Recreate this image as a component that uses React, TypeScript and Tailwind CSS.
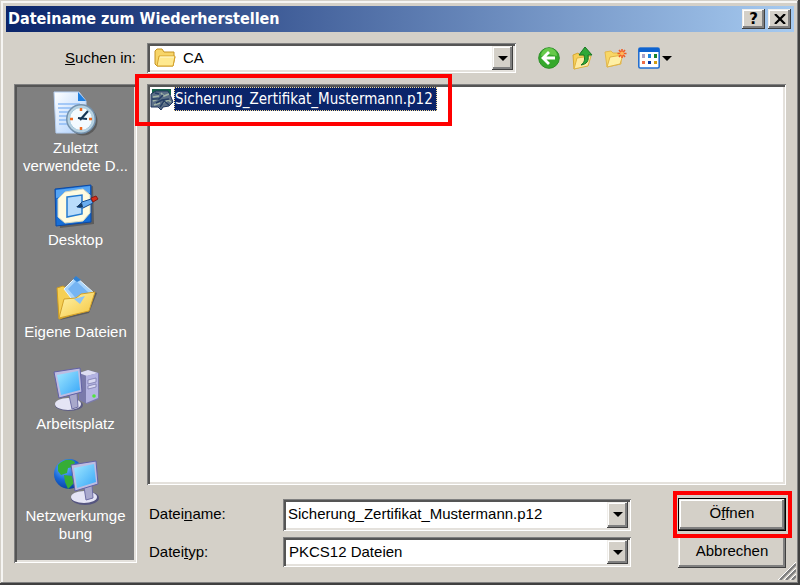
import type { ReactNode } from "react"

const sunken = "shadow-[inset_1px_1px_#808080,inset_-1px_-1px_#ffffff,inset_3px_3px_#555555,inset_-3px_-3px_#e4e1dc]"
const raised = "bg-[#d4d0c8] shadow-[inset_-1px_-1px_#404040,inset_1px_1px_#f0eeea,inset_-3px_-3px_#808080,inset_2px_2px_#ffffff]"

function RecentIcon() {
    return (
        <svg viewBox="0 0 46 46" className="size-[46px] shrink-0" aria-hidden="true">
            <defs>
                <linearGradient id="paper" x1="0" y1="0" x2="1" y2="1">
                    <stop offset="0" stopColor="#ffffff"/>
                    <stop offset="1" stopColor="#a9cdfb"/>
                </linearGradient>
            </defs>
            <path d="M1 1h25l7 9v32H3z" fill="url(#paper)" stroke="#b5cff2"/>
            <path d="M25 1v9h8z" fill="#1f7fe0"/>
            <path d="M5 13h22M5 17h18M6 21h12M6 25h9M6 29h8M6 33h9" stroke="#8fbcf5" strokeWidth="1.5"/>
            <circle cx="30" cy="30" r="14.5" fill="#444" opacity=".6"/>
            <circle cx="28" cy="28" r="15" fill="#7492ae"/>
            <circle cx="28" cy="28" r="13.5" fill="#b9d3e2"/>
            <circle cx="28" cy="28" r="11.5" fill="#f4fbff" stroke="#a5c9dd"/>
            <path d="M28 17v3M28 36v3M17 28h3M36 28h3" stroke="#ee6b22" strokeWidth="2.5"/>
            <path d="M27 29l8-9M25 27l9 1" stroke="#173653" strokeWidth="2.2"/>
        </svg>
    )
}

function DesktopIcon() {
    return (
        <svg viewBox="0 0 46 46" className="size-[46px] shrink-0" aria-hidden="true">
            <path d="M4 8l36-5 1 38-34 4z" fill="#444" opacity=".6"/>
            <path d="M2 6l36-4v37L3 43z" fill="#176fd7" stroke="#0b49a5"/>
            <path d="M3 7l34-4v7L3 15z" fill="#55a4f3"/>
            <path d="M12 9l18-3 7 6v18l-7 8-18 2-7-6V16z" fill="#fffbe0" stroke="#d7d9c0"/>
            <path d="M14 14l15-2v19l-15 3z" fill="#b9dcfb" stroke="#247bd0" strokeWidth="1.5"/>
            <path d="M24 24l5-5 9-3 2 4-10 5z" fill="#6aaef0" stroke="#174d8e"/>
            <path d="M23 24l6-4 1 4z" fill="#173a60"/>
            <path d="M38 15l5-2 2 3-5 3z" fill="#d92d19" stroke="#841b13"/>
        </svg>
    )
}

function DocumentsIcon() {
    return (
        <svg viewBox="0 0 46 46" className="size-[46px] shrink-0" aria-hidden="true">
            <defs>
                <linearGradient id="folder" x1="0" y1="0" x2="1" y2="1">
                    <stop offset="0" stopColor="#fff6b0"/>
                    <stop offset="1" stopColor="#f5c43b"/>
                </linearGradient>
            </defs>
            <path d="M7 45l29-7 8-20-4-2z" fill="#444" opacity=".6"/>
            <path d="M4 13l6-2 5 3 18 3v19L6 44z" fill="#f5cf54" stroke="#cd9b21"/>
            <path d="M11 14L23 2l18 16-16 14z" fill="#a8d4fb" stroke="#eaf6ff"/>
            <path d="M15 14l8-8 13 12-10 9z" fill="#75b4f3"/>
            <path d="M20 4l3-3 5 4-4 2z" fill="#2e7fd1"/>
            <path d="M6 43l5-19 12-1 5-4 14-2-6 19z" fill="url(#folder)" stroke="#d2a12b"/>
            <path d="M21 24l11-3-5 8z" fill="#8cc4f5"/>
        </svg>
    )
}

function ScreenFill() {
    return (
        <linearGradient id="screen" x1="0" y1="0" x2="1" y2="1">
            <stop offset="0" stopColor="#a0e8ff"/>
            <stop offset="1" stopColor="#38a6f8"/>
        </linearGradient>
    )
}

function ComputerIcon() {
    return (
        <svg viewBox="0 0 46 46" className="size-[46px] shrink-0" aria-hidden="true">
            <defs><ScreenFill/></defs>
            <path d="M26 6l9-3 11 3v26l-12 5-8-4z" fill="#7a7aab"/>
            <path d="M26 6l9-3 10 3-11 3z" fill="#dedef2"/>
            <path d="M33 9l12-3v25l-12 5z" fill="#b4b4e2"/>
            <path d="M35 13l8-2v4l-8 2zM35 19l8-2v3l-8 2z" fill="#d9d9f3" stroke="#7272a8" strokeWidth=".7"/>
            <circle cx="41" cy="29" r="1.8" fill="#50e63d"/>
            <ellipse cx="16" cy="38" rx="14" ry="6" fill="#5d5d86"/>
            <ellipse cx="15" cy="37" rx="13" ry="6" fill="#e5e5f5"/>
            <path d="M16 28l8-2 1 14-6 2z" fill="#a8a8cb" stroke="#6e6ea5"/>
            <path d="M1 5l26-4 2 24-23 6z" fill="#bdbde2" stroke="#6261a5"/>
            <path d="M4 8l21-4 2 19-19 5z" fill="url(#screen)"/>
        </svg>
    )
}

function NetworkIcon() {
    return (
        <svg viewBox="0 0 46 46" className="size-[46px] shrink-0" aria-hidden="true">
            <defs>
                <radialGradient id="globe" cx=".35" cy=".3" r=".8">
                    <stop offset="0" stopColor="#6fbcff"/>
                    <stop offset=".5" stopColor="#1868d8"/>
                    <stop offset="1" stopColor="#063790"/>
                </radialGradient>
            </defs>
            <circle cx="16" cy="15" r="15" fill="url(#globe)"/>
            <path d="M5 6c4-5 12-7 17-3l-2 5-5 1-1 5-6 2-3-4zM11 16l8 1 2 7-6 6-3-7zM24 6l5 5-4 4z" fill="#35ad35"/>
            <ellipse cx="32" cy="39" rx="14" ry="7" fill="#55557f"/>
            <ellipse cx="31" cy="38" rx="13" ry="6" fill="#e5e5f5"/>
            <path d="M31 28l8-2 1 13-7 2z" fill="#a9a9cd" stroke="#6e6ea5"/>
            <path d="M18 6l25-4 2 23-23 7z" fill="#bdbde2" stroke="#6261a5"/>
            <path d="M21 9l20-4 2 18-19 6z" fill="url(#screen)"/>
        </svg>
    )
}

function FolderIcon() {
    return (
        <svg viewBox="0 0 22 20" className="h-5 w-[22px]" aria-hidden="true">
            <path d="M1 3l2-2h5l2 3h10v5h1l-2 9H3l-2-2z" fill="#f7d568" stroke="#c49222"/>
            <path d="M5 8h16l-2 10H3z" fill="#ffe98f" stroke="#d7a32b"/>
            <path d="M6 9h14" stroke="#fff9cf"/>
        </svg>
    )
}

function BackIcon() {
    return (
        <svg viewBox="0 0 22 22" className="size-[22px]" aria-hidden="true">
            <circle cx="11" cy="11" r="10.3" fill="#36a82c" stroke="#2c8f27"/>
            <path d="M3 9a8 8 0 0 1 16 0q-8-3-16 0z" fill="#66c94b"/>
            <path d="M11 5l-6 6 6 6M5 11h12" fill="none" stroke="#fff" strokeWidth="2.8"/>
        </svg>
    )
}

function UpIcon() {
    return (
        <svg viewBox="0 0 22 24" className="h-6 w-[22px]" aria-hidden="true">
            <path d="M2 9l5-2 2 2h8v10L3 23z" fill="#f6cf59" stroke="#d6a733"/>
            <path d="M3 23l3-11 14-2-3 10z" fill="#ffeaa0" stroke="#dfb442"/>
            <path d="M10 19c4-3 4-6 3-10H8l6-8 7 8h-4c1 6-1 9-7 10z" fill="#2fa837" stroke="#167620"/>
        </svg>
    )
}

function NewFolderIcon() {
    return (
        <svg viewBox="0 0 23 22" className="h-[22px] w-[23px]" aria-hidden="true">
            <path d="M1 5l6-1 2 2h8v11L3 20z" fill="#f8d765" stroke="#e3b84e"/>
            <path d="M3 20l3-10 13-2-3 9z" fill="#fff0a5" stroke="#e0b347"/>
            <path d="M18 2v9M13.500 6.500h9M15 3l6 7M21 3l-6 7" stroke="#f05b23" strokeWidth="1.600"/>
            <circle cx="18" cy="6.500" r="2" fill="#ffb55b"/>
        </svg>
    )
}

function ViewIcon() {
    return (
        <svg viewBox="0 0 22 22" className="size-[22px]" aria-hidden="true">
            <rect x=".8" y="1" width="20.4" height="20" rx="1.5" fill="#fff" stroke="#236fd0" strokeWidth="1.6"/>
            <path d="M1 1h20v4H1z" fill="#0e63cf"/>
            <path d="M4 7h3v4H4z" fill="#a9a1c6"/>
            <path d="M10 7h3v4h-3z" fill="#1d84de"/>
            <path d="M16 7h3v4h-3z" fill="#16842d"/>
            <path d="M4 14h3v3H4z" fill="#ef6c44"/>
            <path d="M10 14h3v3h-3z" fill="#0a369f"/>
            <path d="M16 14h3v3h-3z" fill="#d29c13"/>
        </svg>
    )
}

function CertificateIcon() {
    return (
        <svg viewBox="0 0 24 22" className="h-[22px] w-6 shrink-0" aria-hidden="true">
            <path d="M2 1h19v6H2z" fill="#17664c"/>
            <path d="M1 6l5-3h12l3 6 2 5-4 4-6 1-2 3-3-3H1z" fill="#5c7087" stroke="#1f355c"/>
            <path d="M3 9l6-1M3 13l5-2M4 17l6-2M11 5l3 3 5-2M13 15l5-3 3 2" fill="none" stroke="#a3b6a8" strokeWidth="1.5"/>
            <path d="M2 11h7l4-4M6 15l6-3 7-1M10 19l4-6 5 4M5 5l4 1" fill="none" stroke="#263f66" strokeWidth="1.5"/>
        </svg>
    )
}

function Arrow() {
    return (
        <svg viewBox="0 0 10 5" className="h-[5px] w-[10px]" aria-hidden="true">
            <path d="M0 0h10L5 5z"/>
        </svg>
    )
}

type SelectProps = {
    id: string,
    value: string,
    className: string,
}

function Select({ id, value, className }: SelectProps) {
    return (
        <div className={`relative flex-1 bg-white p-[3px] ${sunken}`}>
            <select id={id} className={`block size-full appearance-none outline-none ${className}`}>
                <option>{value}</option>
            </select>
            <span className={`pointer-events-none absolute inset-y-[3px] right-[3px] flex w-[21px] items-center justify-center ${raised}`}>
                <Arrow/>
            </span>
        </div>
    )
}

type PlaceProps = {
    label: string,
    icon: ReactNode,
}

const places: PlaceProps[] = [
    { label: "Zuletzt verwendete D...", icon: <RecentIcon/> },
    { label: "Desktop", icon: <DesktopIcon/> },
    { label: "Eigene Dateien", icon: <DocumentsIcon/> },
    { label: "Arbeitsplatz", icon: <ComputerIcon/> },
    { label: "Netzwerkumge\u200bbung", icon: <NetworkIcon/> },
]

function Place({ label, icon }: PlaceProps) {
    return (
        <button className="flex h-[92px] w-full flex-col items-center gap-[2px] leading-[18px] text-white">
            {icon}
            <span>{label}</span>
        </button>
    )
}

export default function App() {
    return (
        <main className="relative flex min-h-screen flex-col bg-[#d4d0c8] p-[6px] font-['Liberation_Sans',Arial,sans-serif] text-[15px] text-black shadow-[inset_-2px_-2px_#404040,inset_1px_1px_#d4d0c8,inset_-3px_-3px_#808080,inset_3px_3px_#f6f5f3]">
            <header className="flex h-[26px] items-center gap-[3px] bg-linear-to-r/srgb from-[#0a246a] to-[#a6caf0] pr-[3px]">
                <h1 className="flex-1 pl-[2px] font-['DejaVu_Sans_Condensed','DejaVu_Sans',sans-serif] text-base font-bold text-white">Dateiname zum Wiederherstellen</h1>
                <button aria-label="Hilfe" className={`flex h-5 w-[23px] items-center justify-center font-['DejaVu_Sans',sans-serif] font-bold leading-5 ${raised}`}>?</button>
                <button aria-label="Schließen" className={`flex h-5 w-[23px] items-center justify-center ${raised}`}>
                    <svg viewBox="0 0 12 10" className="h-[10px] w-3" aria-hidden="true">
                        <path d="M1 0l10 10M11 0L1 10" stroke="#000" strokeWidth="2.2"/>
                    </svg>
                </button>
            </header>

            <div className="flex h-[52px] items-center pl-2">
                <label htmlFor="folder-select" className="w-[133px] pr-[11px] text-right"><u>S</u>uchen in:</label>
                <div className="relative flex h-[30px] flex-1">
                    <Select id="folder-select" value="CA" className="pl-[33px]"/>
                    <span className="pointer-events-none absolute left-[7px] top-[5px]"><FolderIcon/></span>
                </div>
                <div className="ml-[22px] mr-[122px] flex items-center gap-[11px]">
                    <button aria-label="Zurück"><BackIcon/></button>
                    <button aria-label="Übergeordneter Ordner"><UpIcon/></button>
                    <button aria-label="Neuer Ordner"><NewFolderIcon/></button>
                    <button aria-label="Ansicht" className="flex items-center gap-[2px]"><ViewIcon/><Arrow/></button>
                </div>
            </div>

            <div className="flex flex-1 gap-[10px] px-2 pb-[11px]">
                <nav className={`mb-[5px] w-[123px] bg-[#808080] px-[3px] pt-[7px] ${sunken}`}>
                    {places.map(place => <Place key={place.label} {...place}/>)}
                </nav>

                <section className="flex flex-1 flex-col">
                    <div className={`relative flex-1 bg-white p-[3px] ${sunken}`}>
                        <button className="flex items-center font-['DejaVu_Sans_Condensed','DejaVu_Sans',sans-serif] text-white">
                            <CertificateIcon/>
                            <span className="border border-dotted border-[#f5db95] bg-[#0a246a] pr-[3px] leading-[22px]">Sicherung_Zertifikat_Mustermann.p12</span>
                        </button>
                        <div className="pointer-events-none absolute -left-3 -top-[10px] h-[52px] w-[317px] border-4 border-[#ff0000]"/>
                    </div>

                    <form className="mt-[13px] flex flex-col gap-[5px]" onSubmit={event => event.preventDefault()}>
                        <div className="flex h-[33px] items-center">
                            <label htmlFor="filename" className="w-[136px] pl-[2px]">Datei<u>n</u>ame:</label>
                            <div className={`flex h-8 flex-1 bg-white p-[3px] ${sunken}`}>
                                <input id="filename" defaultValue="Sicherung_Zertifikat_Mustermann.p12" className="min-w-0 flex-1 pl-[2px] outline-none"/>
                                <button type="button" aria-label="Dateinamen anzeigen" className={`flex w-[21px] items-center justify-center ${raised}`}><Arrow/></button>
                            </div>
                            <div className="relative ml-[47px] h-full w-[108px]">
                                <button type="submit" className={`size-full border border-black pb-[2px] ${raised}`}>Ö<u>f</u>fnen</button>
                                <div className="pointer-events-none absolute -left-[5px] -top-[7px] h-[47px] w-[119px] border-4 border-[#ff0000]"/>
                            </div>
                        </div>
                        <div className="flex h-8 items-center">
                            <label htmlFor="filetype" className="w-[136px] pl-[2px]">Datei<u>t</u>yp:</label>
                            <div className="flex h-[30px] flex-1"><Select id="filetype" value="PKCS12 Dateien" className="pl-[3px]"/></div>
                            <button type="button" className={`ml-[47px] h-8 w-[108px] pb-[2px] ${raised}`}>Abbrechen</button>
                        </div>
                    </form>
                </section>
            </div>
            <svg viewBox="0 0 18 18" className="pointer-events-none absolute bottom-[5px] right-[4px] size-[18px]" aria-hidden="true">
                <path d="M2 18L18 2M8 18L18 8M14 18l4-4" stroke="#808080" strokeWidth="2.5"/>
                <path d="M0 18L18 0M6 18L18 6M12 18l6-6" stroke="#fff"/>
            </svg>
        </main>
    )
}
